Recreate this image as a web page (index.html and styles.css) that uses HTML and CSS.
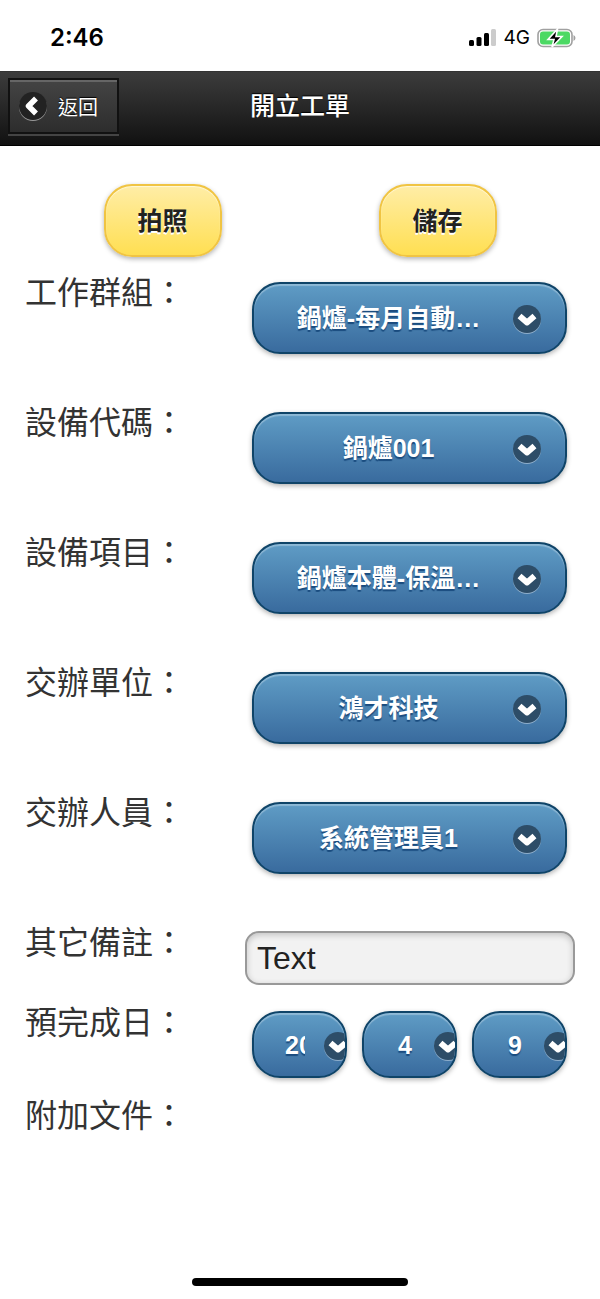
FILE: index.html
```html
<!DOCTYPE html>
<html lang="zh-Hant">
<head>
    <meta charset="UTF-8">
    <meta name="viewport" content="width=device-width, initial-scale=1.0">
    <title>開立工單</title>
    <link rel="stylesheet" href="styles.css">
</head>
<body>
    <svg class="sprite" aria-hidden="true">
        <symbol id="arrow-down" viewBox="0 0 30 30">
            <circle cx="15" cy="16" r="14" fill="#fff" fill-opacity="0.4"/>
            <circle cx="15" cy="15" r="14" fill="#2d4d68"/>
            <path d="M7.500 12 15 18.500 22.500 12" fill="none" stroke="#fff" stroke-width="6" stroke-linejoin="round"/>
        </symbol>
    </svg>

    <div class="status-bar">
        <span class="time">2:46</span>
        <div class="status-icons">
            <svg width="28" height="18" viewBox="0 0 28 18">
                <rect x="0" y="11" width="5" height="6" rx="1.5"/>
                <rect x="7.5" y="8" width="5" height="9" rx="1.5"/>
                <rect x="15" y="4" width="5" height="13" rx="1.5"/>
                <rect x="22" y="0" width="5" height="17" rx="1.5" fill="#ccc"/>
            </svg>
            <span>4G</span>
            <svg width="39" height="20" viewBox="0 0 39 20">
                <rect x="1" y="1.5" width="34" height="17" rx="5" fill="#fff" stroke="#a0a0a0" stroke-width="1.6"/>
                <rect x="3" y="3.5" width="30" height="13" rx="3" fill="#4cd964"/>
                <path d="M36.5 7v6q2-1 2-3t-2-3z" fill="#a0a0a0"/>
                <path d="M20.500 1 11 11.500h6L15 19 25 8.500h-6z" fill="#000" stroke="#fff" stroke-width="1.6"/>
            </svg>
        </div>
    </div>

    <header>
        <a class="back" href="#">
            <svg width="30" height="31" viewBox="0 0 30 31">
                <circle cx="15" cy="16" r="14" fill="#999"/>
                <circle cx="15" cy="15" r="14" fill="#222"/>
                <path d="M18 7.500 10.500 15 18 22.500" fill="none" stroke="#fff" stroke-width="5.5" stroke-linejoin="round"/>
            </svg>
            返回
        </a>
        <h1>開立工單</h1>
    </header>

    <form class="content">
        <div class="actions">
            <button class="button" type="button">拍照</button>
            <button class="button" type="button">儲存</button>
        </div>

        <div class="row">
            <label for="group">工作群組：</label>
            <div class="select">
                <select id="group"><option>鍋爐-每月自動…</option></select>
                <svg class="arrow"><use href="#arrow-down"/></svg>
            </div>
        </div>
        <div class="row">
            <label for="device">設備代碼：</label>
            <div class="select">
                <select id="device"><option>鍋爐001</option></select>
                <svg class="arrow"><use href="#arrow-down"/></svg>
            </div>
        </div>
        <div class="row">
            <label for="item">設備項目：</label>
            <div class="select">
                <select id="item"><option>鍋爐本體-保溫…</option></select>
                <svg class="arrow"><use href="#arrow-down"/></svg>
            </div>
        </div>
        <div class="row">
            <label for="unit">交辦單位：</label>
            <div class="select">
                <select id="unit"><option>鴻才科技</option></select>
                <svg class="arrow"><use href="#arrow-down"/></svg>
            </div>
        </div>
        <div class="row">
            <label for="person">交辦人員：</label>
            <div class="select">
                <select id="person"><option>系統管理員1</option></select>
                <svg class="arrow"><use href="#arrow-down"/></svg>
            </div>
        </div>
        <div class="row row-note">
            <label for="note">其它備註：</label>
            <input class="input" id="note" type="text" value="Text">
        </div>
        <div class="row row-date">
            <label for="year">預完成日：</label>
            <div class="dates">
                <div class="select small">
                    <select id="year"><option>20</option></select>
                    <svg class="arrow"><use href="#arrow-down"/></svg>
                </div>
                <div class="select small">
                    <select aria-label="月"><option>4</option></select>
                    <svg class="arrow"><use href="#arrow-down"/></svg>
                </div>
                <div class="select small">
                    <select aria-label="日"><option>9</option></select>
                    <svg class="arrow"><use href="#arrow-down"/></svg>
                </div>
            </div>
        </div>
        <div class="row row-file">
            <span class="label">附加文件：</span>
        </div>
    </form>

    <div class="home-bar"></div>
</body>
</html>
```
FILE: styles.css
```css
* {
    box-sizing: border-box;
}
body {
    margin: 0;
    min-height: 100vh;
    display: flex;
    flex-direction: column;
    background: #fff;
    color: #333;
    font-family: "Liberation Sans", "Noto Sans CJK TC", sans-serif;
}
.sprite {
    position: absolute;
    width: 0;
    height: 0;
}

/* Status bar */
.status-bar {
    height: 71px;
    padding: 4px 24px 0 50px;
    display: flex;
    justify-content: space-between;
    align-items: center;
    color: #000;
}
.time {
    font-family: Inter, sans-serif;
    font-size: 24px;
    font-weight: 600;
    line-height: 28px;
}
.status-icons {
    display: flex;
    align-items: center;
    gap: 7px;
    font-family: Inter, sans-serif;
    font-size: 19px;
}

/* Header */
header {
    height: 75px;
    padding: 0 8px 5px;
    display: grid;
    grid-template-columns: 1fr auto 1fr;
    align-items: center;
    color: #fff;
    background: linear-gradient(#3c3c3c, #111);
    border-top: 1px solid #333;
    border-bottom: 1px solid #000;
    text-shadow: 0 -1px 1px #000;
}
.back {
    justify-self: start;
    width: 111px;
    height: 56px;
    padding: 0 8px;
    display: flex;
    align-items: center;
    gap: 10px;
    color: #fff;
    font-size: 20px;
    text-decoration: none;
    white-space: nowrap;
    background: linear-gradient(#444, #2d2d2d);
    border: 2px solid #111;
    box-shadow: inset 0 2px 0 #666, 0 2px 0 #444;
}
h1 {
    margin: 0;
    padding-bottom: 4px;
    font-size: 25px;
    font-weight: 500;
}

/* Form */
.content {
    padding: 38px 25px 0;
}
.actions {
    display: grid;
    grid-template-columns: 1fr 1fr;
    justify-items: center;
    margin-bottom: 16px;
}
.button {
    width: 118px;
    height: 73px;
    padding: 0 0 4px;
    border: 2px solid #f0c443;
    border-radius: 28px;
    background: linear-gradient(#ffeda6, #ffdf52);
    box-shadow: inset 0 1px 1px #fff8d8, 0 2px 5px rgba(0, 0, 0, 0.3);
    color: #222;
    font-family: inherit;
    font-size: 25px;
    font-weight: bold;
    text-shadow: 0 2px 0 #fff;
}
.row {
    min-height: 130px;
    display: grid;
    grid-template-columns: 2fr 3fr;
    align-items: start;
}
.row-note {
    min-height: 80px;
}
.row-date {
    min-height: 93px;
}
.row-file {
    min-height: 40px;
}
label,
.label {
    font-size: 32px;
    line-height: 40px;
    white-space: nowrap;
}
.select {
    position: relative;
    height: 72px;
    margin: 9px 8px 0 7px;
    overflow: hidden;
    border: 2px solid #0f4468;
    border-radius: 28px;
    background: linear-gradient(#5f9cc5, #396b9e);
    box-shadow: 0 2px 5px rgba(0, 0, 0, 0.3);
}
.select select {
    appearance: none;
    width: 100%;
    height: 100%;
    padding: 0 78px 0 36px;
    border: 0;
    border-radius: 26px;
    background: transparent;
    box-shadow: inset 0 2px 1px rgba(255, 255, 255, 0.3);
    color: #fff;
    font-family: inherit;
    font-size: 25px;
    font-weight: bold;
    text-align: center;
    text-align-last: center;
    text-shadow: 0 2px 1px #194b7e;
}
.arrow {
    position: absolute;
    top: 50%;
    right: 23px;
    width: 30px;
    height: 30px;
    margin-top: -14px;
    pointer-events: none;
}
.dates {
    display: grid;
    grid-template-columns: repeat(3, 1fr);
    gap: 15px;
    margin: 8px 8px 0 7px;
}
.small {
    height: 67px;
    margin: 0;
}
.small select {
    padding: 0 40px 0 31px;
}
.small .arrow {
    right: -8px;
}
.input {
    width: 100%;
    height: 54px;
    margin: 8px 0 0;
    padding: 0 10px;
    border: 2px solid #999;
    border-radius: 14px;
    background: #f2f2f2;
    box-shadow: inset 0 2px 6px rgba(0, 0, 0, 0.2);
    color: #222;
    font-family: inherit;
    font-size: 32px;
}

/* Home indicator */
.home-bar {
    width: 36%;
    height: 8px;
    margin: auto auto 13px;
    border-radius: 4px;
    background: #000;
}
```
